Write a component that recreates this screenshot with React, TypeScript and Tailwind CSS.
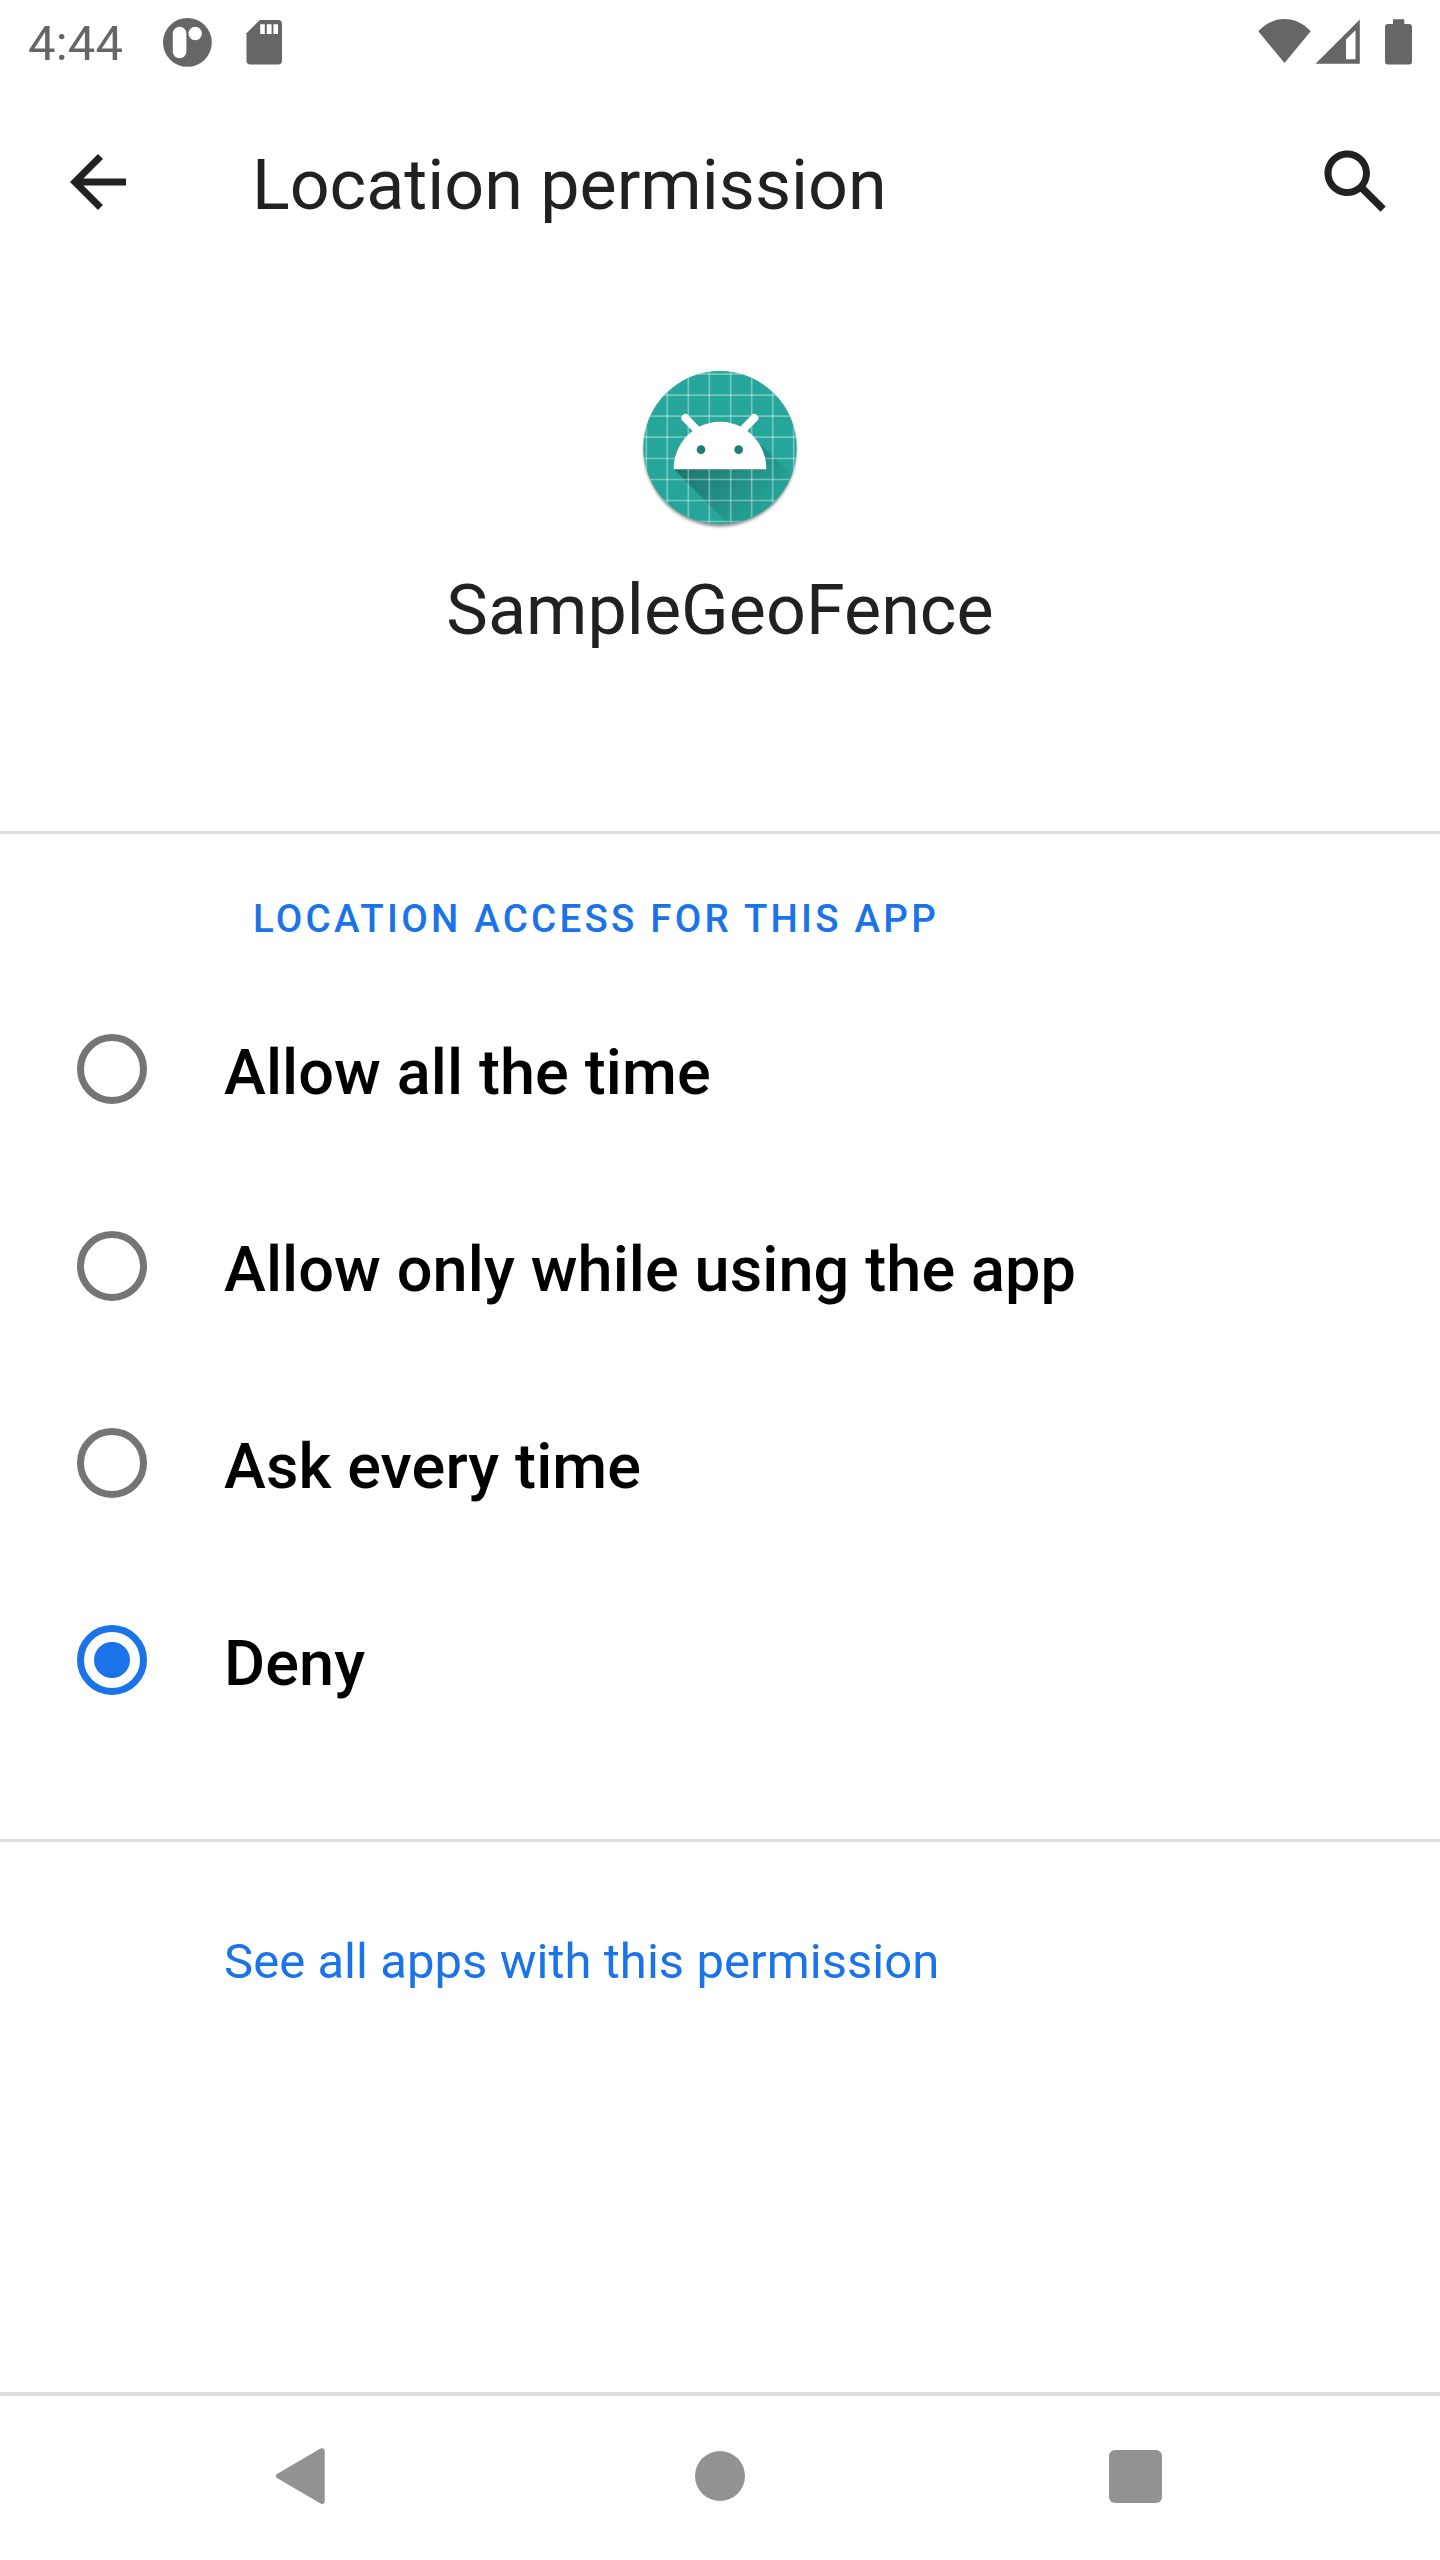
const options = ["Allow all the time", "Allow only while using the app", "Ask every time", "Deny"];

function StatusBar() {
  return (
    <div className="flex h-[84px] items-start justify-between pl-7 text-[#666666]">
      <div className="flex items-start">
        <span className="w-[123px] pt-[16px] text-[49px] leading-[56px] tracking-[0.2px]">4:44</span>
        <svg className="mt-[6px]" width="150" height="72" viewBox="151 6 150 72" fill="currentColor">
          <circle cx="187.4" cy="42.4" r="24.4" />
          <rect x="172.8" y="26.8" width="13.6" height="31.4" rx="6.8" fill="white" />
          <circle cx="195.2" cy="33.5" r="6.7" fill="white" />
          <path d="M259.8 20H278a4 4 0 0 1 4 4v36.500a4 4 0 0 1-4 4h-27.500a4 4 0 0 1-4-4V33.300z" />
          <path d="M260.200 24.300h4.600v9.700h-4.600zM266.800 24.300h4.800v9.700h-4.800zM273.400 24.300h4.600v9.700h-4.600z" fill="white" />
        </svg>
      </div>
      <svg width="190" height="84" viewBox="1250 0 190 84" fill="currentColor">
        <path d="M1258.300 31.300C1265.500 23.500 1274.500 19 1284.500 19S1303.500 23.500 1310.700 31.300L1284.500 63z" />
        <path fillRule="evenodd" d="M1315.500 63.700L1359.800 19.500V63.700zM1346 39.600V59.300H1355.500V30.300z" />
        <path d="M1393 19.300h11.300v4.700h4.700a3 3 0 0 1 3 3v34.500a3 3 0 0 1-3 3h-21a3 3 0 0 1-3-3V27a3 3 0 0 1 3-3h5z" />
      </svg>
    </div>
  );
}

function AppIcon() {
  const lines = [79, 142, 205, 268, 332, 395, 458, 521];
  return (
    <svg width="200" height="200" viewBox="0 0 600 600">
      <defs>
        <clipPath id="disc">
          <circle cx="300" cy="293" r="230" />
        </clipPath>
        <linearGradient id="cast" gradientUnits="userSpaceOnUse" x1="200" y1="280" x2="430" y2="510">
          <stop offset="0" stopColor="#1c6f68" />
          <stop offset="1" stopColor="#26a69a" />
        </linearGradient>
        <filter id="soft" x="-20%" y="-20%" width="140%" height="140%">
          <feGaussianBlur stdDeviation="5" />
        </filter>
      </defs>
      <circle cx="300" cy="301" r="229" fill="black" opacity="0.42" filter="url(#soft)" />
      <g clipPath="url(#disc)">
        <rect x="60" y="60" width="480" height="480" fill="#26a69a" />
        <path d="M161 357L425 285L560 420V560H363z" fill="url(#cast)" />
        {lines.map((p) => (
          <g key={p} stroke="white" strokeOpacity="0.36" strokeWidth="5">
            <path d={`M${p} 60V540`} />
            <path d={`M60 ${p - 6.5}H540`} />
          </g>
        ))}
      </g>
      <path d="M196 204L234 243M403 204L365 243" stroke="white" strokeWidth="24" strokeLinecap="round" />
      <path d="M161 358C161 279 222 215 300 215S439 279 439 358z" fill="white" />
      <circle cx="243" cy="299" r="13" fill="#1f7d74" />
      <circle cx="356" cy="299" r="13" fill="#1f7d74" />
    </svg>
  );
}

function Option({ label, checked }: { label: string; checked: boolean }) {
  return (
    <div className="flex h-[197px] items-center pl-[77px]">
      <span
        className={
          checked
            ? "flex size-[70px] items-center justify-center rounded-full border-[7px] border-[#1a73e8]"
            : "size-[70px] rounded-full border-[7px] border-[#757575]"
        }
      >
        {checked && <span className="size-[36px] rounded-full bg-[#1a73e8]" />}
      </span>
      <span className="ml-[77px] pt-[7px] text-[63px] leading-[74px] font-medium tracking-[0.11px] text-black">
        {label}
      </span>
    </div>
  );
}

export default function App() {
  return (
    <div className="flex h-[2560px] w-[1440px] flex-col bg-white font-[Roboto,sans-serif] text-[#212121]">
      <StatusBar />
      <header className="flex h-[196px] items-center pr-[42px] pl-[56px]">
        <svg width="84" height="84" viewBox="0 0 24 24" fill="currentColor">
          <path d="M20 11H7.830l5.590-5.590L12 4l-8 8 8 8 1.410-1.410L7.830 13H20v-2z" />
        </svg>
        <h1 className="ml-[112px] flex-1 pt-[6px] text-[70px] leading-[82px]">Location permission</h1>
        <svg width="84" height="84" viewBox="0 0 24 24" fill="currentColor">
          <path d="M20.490 19l-5.730-5.730C15.530 12.200 16 10.910 16 9.500C16 5.910 13.090 3 9.500 3S3 5.910 3 9.500C3 13.090 5.910 16 9.500 16c1.410 0 2.700-.470 3.770-1.240L19 20.490L20.490 19zM5 9.500C5 7.010 7.010 5 9.500 5S14 7.010 14 9.500S11.990 14 9.500 14S5 11.990 5 9.500z" />
        </svg>
      </header>
      <section className="flex h-[554px] flex-col items-center border-b-[3px] border-[#dadce0] pt-[70px]">
        <AppIcon />
        <h2 className="mt-[19px] text-[70px] leading-[82px] tracking-[0.05px]">SampleGeoFence</h2>
      </section>
      <section className="h-[1008px] border-b-[3px] border-[#dadce0] pt-[49px]">
        <h3 className="pl-[253px] text-[38.5px] leading-[72px] font-medium tracking-[3.23px] text-[#1a73e8]">
          LOCATION ACCESS FOR THIS APP
        </h3>
        <div className="mt-[15.5px]">
          {options.map((label) => (
            <Option key={label} label={label} checked={label === "Deny"} />
          ))}
        </div>
      </section>
      <section className="flex-1 pt-[91px] pl-[224px]">
        <a className="text-[49px] leading-[58px] tracking-[0.05px] text-[#1a73e8]">See all apps with this permission</a>
      </section>
      <nav className="flex h-[168px] items-center border-t-4 border-[#dfdfdf] pb-1 pl-[275px] text-[#929292]">
        <svg width="50" height="58" viewBox="275 2447 50 58" fill="currentColor">
          <path d="M276.500 2474.200L320.500 2448.500Q324.700 2447 324.700 2451.500V2500.500Q324.700 2505 320.500 2503.500L276.500 2477.800Q275 2476 276.500 2474.200z" />
        </svg>
        <span className="ml-[370px] size-[50px] rounded-full bg-[#929292]" />
        <span className="ml-[363.5px] size-[53px] rounded-[6px] bg-[#929292]" />
      </nav>
    </div>
  );
}
